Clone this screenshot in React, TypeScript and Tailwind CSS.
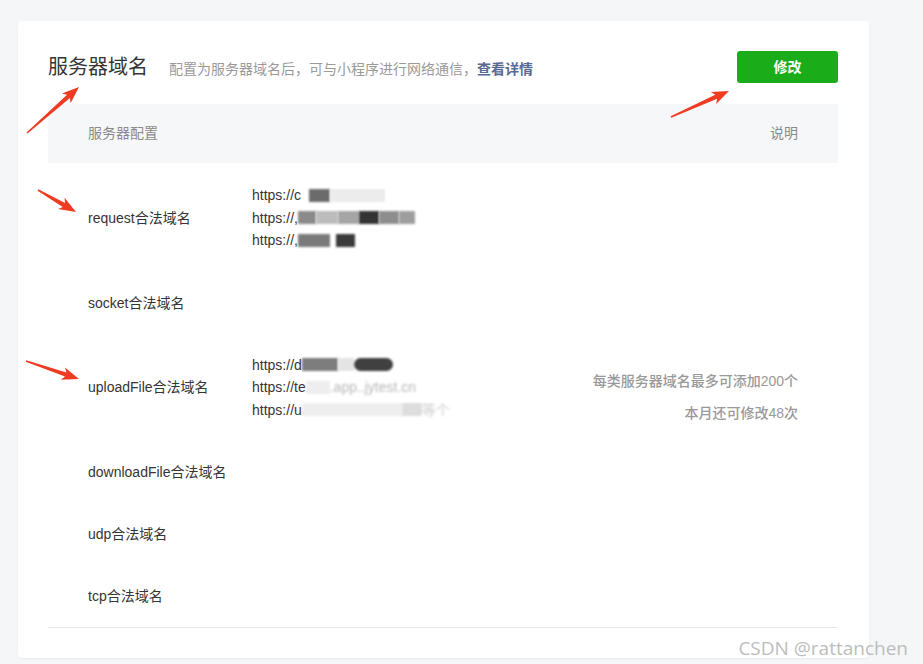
import React from "react";

type Pt = [number, number];

// red hand-drawn style arrow, tail -> tip
function Arrow({ tail, tip }: { tail: Pt; tip: Pt }) {
  const dx = tip[0] - tail[0];
  const dy = tip[1] - tail[1];
  const len = Math.sqrt(dx * dx + dy * dy);
  const ux = dx / len;
  const uy = dy / len;
  const nx = -uy;
  const ny = ux;
  const headLen = 17;
  const base: Pt = [tip[0] - ux * headLen, tip[1] - uy * headLen];
  const p = (c: Pt, w: number, back = 0): string =>
    `${c[0] + nx * w - ux * back},${c[1] + ny * w - uy * back}`;
  const pts = [
    p(tail, 0.8),
    p(base, 2.2, -3),
    p(base, 6.5),
    `${tip[0]},${tip[1]}`,
    p(base, -6.5),
    p(base, -2.2, -3),
    p(tail, -0.8),
  ].join(" ");
  return <polygon points={pts} fill="#ef3b22" />;
}

function Blur({ w, c, r = "" }: { w: number; c: string; r?: string }) {
  return (
    <span
      className={`inline-block h-[13px] align-middle blur-[1.2px] ${r}`}
      style={{ width: w, backgroundColor: c }}
    />
  );
}

function Url({ head, children }: { head: string; children?: React.ReactNode }) {
  return (
    <div className="flex items-center leading-[22.5px] whitespace-nowrap">
      <span>{head}</span>
      {children}
    </div>
  );
}

function Row({
  label,
  children,
}: {
  label: string;
  children?: React.ReactNode;
}) {
  return (
    <div className="flex items-center py-5 min-h-[62px]">
      <div className="w-[204px] pl-10 leading-[22px]">{label}</div>
      <div className="flex flex-col">{children}</div>
    </div>
  );
}

export default function App() {
  return (
    <div className="relative min-h-screen bg-[#f5f6f8] pt-[21px] pl-[18px] font-['Liberation_Sans','Noto_Sans_CJK_SC',sans-serif] text-[14px] text-[#353535]">
      <div className="w-[851px] rounded bg-white pl-[30px] pr-[31px] pt-[30px] pb-[30px] shadow-[0_1px_2px_rgba(0,0,0,0.06)]">
        <div className="flex h-[32px] items-center justify-between">
          <div className="flex items-baseline">
            <h2 className="text-[20px] leading-[32px] font-normal">服务器域名</h2>
            <p className="ml-[21px] text-[14px] text-[#9a9a9a]">
              配置为服务器域名后，可与小程序进行网络通信，
              <span className="font-semibold text-[#576b95]">查看详情</span>
            </p>
          </div>
          <button className="h-[32px] w-[101px] rounded-[3px] bg-[#1aad19] text-[14px] font-semibold text-white">
            修改
          </button>
        </div>

        <div className="mt-[21px] border-b border-[#e7e7eb]">
          <div className="flex h-[59px] items-center justify-between bg-[#f6f7f9] px-10 text-[#8a8a8a]">
            <span>服务器配置</span>
            <span>说明</span>
          </div>

          <div className="flex">
            <div className="flex flex-1 flex-col pt-px">
              <Row label="request合法域名">
                <Url head="https://c">
                  <span className="ml-[2px] w-[6px]" />
                  <Blur w={21} c="#6b6b6b" />
                  <Blur w={55} c="#ececec" />
                </Url>
                <Url head="https://,">
                  <Blur w={18} c="#8a8a8a" />
                  <Blur w={22} c="#bcbcbc" />
                  <Blur w={21} c="#a5a5a5" />
                  <Blur w={20} c="#333333" />
                  <Blur w={20} c="#8d8d8d" />
                  <Blur w={16} c="#9e9e9e" />
                </Url>
                <Url head="https://,">
                  <Blur w={32} c="#7a7a7a" />
                  <span className="w-[6px]" />
                  <Blur w={19} c="#3a3a3a" />
                </Url>
              </Row>
              <Row label="socket合法域名" />
              <Row label="uploadFile合法域名">
                <Url head="https://d">
                  <Blur w={36} c="#7d7d7d" />
                  <Blur w={16} c="#e4e4e4" />
                  <Blur w={39} c="#404040" r="rounded-full" />
                </Url>
                <Url head="https://te">
                  <Blur w={24} c="#eeeeee" />
                  <span className="text-[#b8b8b8] blur-[0.8px]">.app..jytest.cn</span>
                </Url>
                <Url head="https://u">
                  <Blur w={100} c="#eeeeee" />
                  <Blur w={20} c="#dddddd" />
                  <span className="text-[#cfcfcf] blur-[0.8px]">等个</span>
                </Url>
              </Row>
              <Row label="downloadFile合法域名" />
              <Row label="udp合法域名" />
              <Row label="tcp合法域名" />
            </div>
            <div className="flex flex-col items-end justify-center gap-[10px] pr-10 pt-[4px] font-medium text-[#999999] leading-[22px]">
              <p>每类服务器域名最多可添加200个</p>
              <p>本月还可修改48次</p>
            </div>
          </div>
        </div>
      </div>

      <svg
        className="pointer-events-none absolute left-0 top-0"
        width={923}
        height={664}
      >
        <Arrow tail={[27, 133]} tip={[79, 87]} />
        <Arrow tail={[671, 117]} tip={[729, 91]} />
        <Arrow tail={[38, 190]} tip={[76, 212]} />
        <Arrow tail={[26, 361]} tip={[79, 379]} />
      </svg>

      <div className="absolute right-[15px] top-[634px] font-['Open_Sans',sans-serif] text-[19px] leading-[28px] text-[#bdbdbd]">
        CSDN @rattanchen
      </div>
    </div>
  );
}
